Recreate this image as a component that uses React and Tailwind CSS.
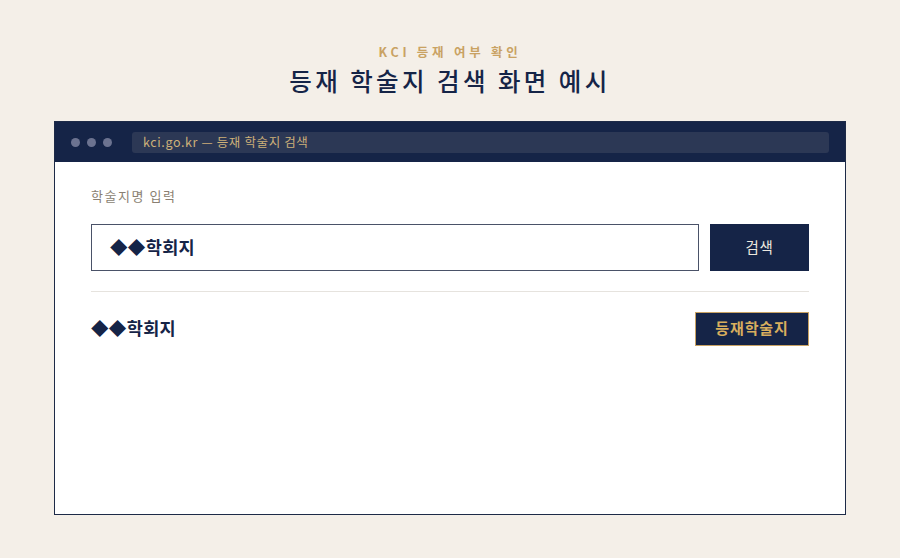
const KR = "font-['Noto_Sans_CJK_KR','Noto_Sans',sans-serif]"

function WindowBar() {
  return (
    <div className="flex h-10 items-center gap-[20px] bg-[#152447] pl-4 pr-4">
      <div className="flex gap-[7px]">
        <span className="h-[9px] w-[9px] rounded-full bg-[#6c7390]" />
        <span className="h-[9px] w-[9px] rounded-full bg-[#6c7390]" />
        <span className="h-[9px] w-[9px] rounded-full bg-[#6c7390]" />
      </div>
      <div className="flex h-[21px] flex-1 items-center rounded-[3px] bg-[#2c3855] px-[11px] text-[12.5px] tracking-[0.05em] text-[#cdb079]">
        kci.go.kr — 등재 학술지 검색
      </div>
    </div>
  )
}

export default function App() {
  return (
    <div className={`${KR} h-[558px] w-[900px] bg-[#f4efe8]`}>
      <header className="flex flex-col items-center pt-[43px]">
        <p className="text-[12.5px] font-bold leading-[18px] tracking-[0.3em] text-[#c9a263]">KCI 등재 여부 확인</p>
        <h1 className="mt-[3px] text-[24.5px] font-medium leading-[34px] tracking-[0.14em] text-[#152447]">
          등재 학술지 검색 화면 예시
        </h1>
      </header>

      <div className="mx-[54px] mt-[23px] h-[394px] overflow-hidden border border-[#1d2a47] bg-white">
        <WindowBar />
        <div className="px-[36px] pt-[24px]">
          <label className="block text-[13px] tracking-[0.12em] text-[#8a7f72]">학술지명 입력</label>
          <div className="mt-[18px] flex gap-[11px]">
            <div className="flex h-[47px] flex-1 items-center border-[1.5px] border-[#4a5268] px-[18px] text-[17.5px] font-bold tracking-[0.02em] text-[#152447]">
              ◆◆학회지
            </div>
            <button className="h-[47px] w-[99px] bg-[#152447] text-[14.5px] tracking-[0.04em] text-[#ece8df]">검색</button>
          </div>
          <hr className="mt-[20px] border-t border-[#e6e3de]" />
          <div className="mt-[20px] flex items-center justify-between">
            <span className="text-[17.5px] font-bold tracking-[0.02em] text-[#152447]">◆◆학회지</span>
            <span className="flex h-[34px] w-[114px] items-center justify-center border border-[#c9a263] bg-[#152447] text-[15px] font-bold tracking-[0.06em] text-[#d8ae5e]">
              등재학술지
            </span>
          </div>
        </div>
      </div>
    </div>
  )
}
